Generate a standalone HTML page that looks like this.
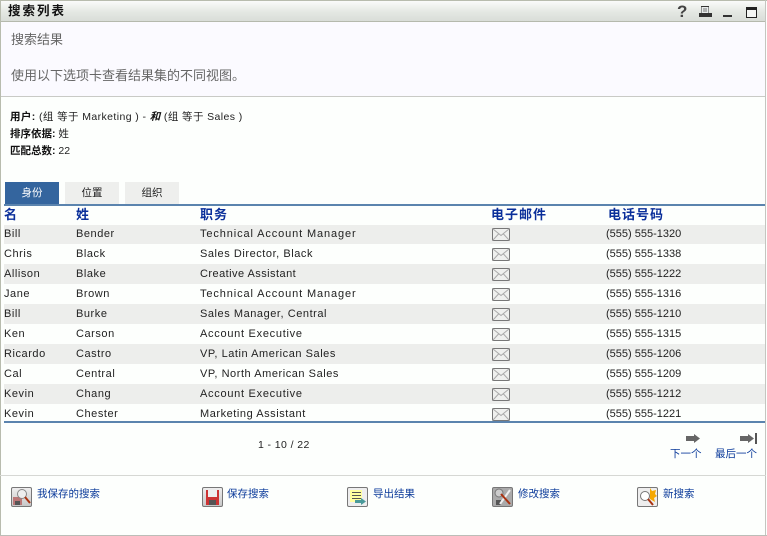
<!DOCTYPE html>
<html lang="zh"><head><meta charset="utf-8"><style>
html,body{margin:0;padding:0}
body{width:767px;height:536px;position:relative;overflow:hidden;background:#fff;font-family:"Liberation Sans","WenQuanYi Zen Hei","Noto Sans CJK SC",sans-serif;font-size:11px;color:#222}
div,a,svg{position:absolute}
.t{white-space:nowrap;line-height:14px}
.r{left:4px;width:761px;height:20px}
.g{background:#edeeec}
.c{white-space:nowrap;line-height:14px;letter-spacing:.55px;color:#222}
.p{letter-spacing:0;left:606px}
.h{white-space:nowrap;font-weight:bold;font-size:13px;letter-spacing:1px;line-height:16px;color:#0a2f9a;top:207px}
.l{white-space:nowrap;color:#0a3a9a;font-size:10.5px;line-height:14px}
.b{font-weight:bold;color:#111}
.tab{top:182px;width:54px;height:22px;background:#eeefed;text-align:center;line-height:22px;font-size:10.5px;color:#222}
.ic{width:21px;height:20px;top:487px;background:linear-gradient(#eee,#c8c8c8);border:1px solid #777;border-radius:2px;box-sizing:border-box;overflow:hidden}
</style></head><body>
<div style="left:0;top:0;width:767px;height:536px;background:#fdfffd"></div>
<div style="left:0;top:1px;width:766px;height:20px;background:linear-gradient(#fafbfa,#e4e8e3 55%,#d9ddd8)"></div>
<div style="left:0;top:21px;width:766px;height:1px;background:#b5b9ad"></div>
<div style="left:0;top:22px;width:766px;height:74px;background:#fbfaff"></div>
<div style="left:0;top:96px;width:766px;height:1px;background:#c9cac6"></div>
<div style="left:0;top:0;width:767px;height:1px;background:#b8bcae"></div>
<div style="left:0;top:0;width:1px;height:536px;background:#b8bcae"></div>
<div style="left:765px;top:0;width:1px;height:536px;background:#c4c6c0"></div>
<div style="left:0;top:535px;width:767px;height:1px;background:#bcbeb8"></div>

<div class="t" style="left:8px;top:4px;font-size:12.5px;font-weight:bold;color:#111;letter-spacing:2px">搜索列表</div>
<div class="t" style="left:677px;top:5px;font-size:17px;font-weight:bold;color:#444">?</div>
<svg style="left:699px;top:6px" width="14" height="12"><path d="M0 7h2v-7h8v7h3v4H0z" fill="#333"/><rect x="2.500" y="1" width="7" height="6" fill="#e8ecec"/><path d="M4 3h4M4 5h4" stroke="#777"/></svg>
<div style="left:723px;top:15px;width:9px;height:2px;background:#333"></div>
<div style="left:746px;top:7px;width:9px;height:7px;border:1px solid #222;border-top:3px solid #222;background:#f4f6f4"></div>

<div class="t" style="left:11px;top:33px;font-size:13px;color:#666">搜索结果</div>
<div class="t" style="left:11px;top:69px;font-size:13px;color:#666">使用以下选项卡查看结果集的不同视图。</div>

<div class="t" style="left:10px;top:110px;font-size:10.5px;letter-spacing:.4px"><span class="b">用户:</span> (组 等于 Marketing ) - <span class="b"><i>和</i></span> (组 等于 Sales )</div>
<div class="t" style="left:10px;top:127px;font-size:10.5px"><span class="b">排序依据:</span> 姓</div>
<div class="t" style="left:10px;top:144px;font-size:10.5px"><span class="b">匹配总数:</span> 22</div>

<div class="tab" style="left:5px;background:#34659e;color:#fff">身份</div>
<div class="tab" style="left:65px">位置</div>
<div class="tab" style="left:125px">组织</div>
<div style="left:4px;top:204px;width:761px;height:2px;background:#5b84ae"></div>
<div class="h" style="left:4px">名</div>
<div class="h" style="left:76px">姓</div>
<div class="h" style="left:200px">职务</div>
<div class="h" style="left:491px">电子邮件</div>
<div class="h" style="left:608px">电话号码</div>

<div class="r g" style="top:225px;height:19px"></div>
<div class="r g" style="top:264px"></div>
<div class="r g" style="top:304px"></div>
<div class="r g" style="top:344px"></div>
<div class="r g" style="top:384px"></div>

<div class="c" style="left:4px;top:227px">Bill</div><div class="c" style="left:76px;top:227px">Bender</div><div class="c" style="left:200px;top:227px;letter-spacing:.88px">Technical Account Manager</div><div class="c p" style="top:227px">(555) 555-1320</div>
<div class="c" style="left:4px;top:247px">Chris</div><div class="c" style="left:76px;top:247px">Black</div><div class="c" style="left:200px;top:247px">Sales Director, Black</div><div class="c p" style="top:247px">(555) 555-1338</div>
<div class="c" style="left:4px;top:267px">Allison</div><div class="c" style="left:76px;top:267px">Blake</div><div class="c" style="left:200px;top:267px;letter-spacing:.45px">Creative Assistant</div><div class="c p" style="top:267px">(555) 555-1222</div>
<div class="c" style="left:4px;top:287px">Jane</div><div class="c" style="left:76px;top:287px">Brown</div><div class="c" style="left:200px;top:287px;letter-spacing:.88px">Technical Account Manager</div><div class="c p" style="top:287px">(555) 555-1316</div>
<div class="c" style="left:4px;top:307px">Bill</div><div class="c" style="left:76px;top:307px">Burke</div><div class="c" style="left:200px;top:307px">Sales Manager, Central</div><div class="c p" style="top:307px">(555) 555-1210</div>
<div class="c" style="left:4px;top:327px">Ken</div><div class="c" style="left:76px;top:327px">Carson</div><div class="c" style="left:200px;top:327px;letter-spacing:.72px">Account Executive</div><div class="c p" style="top:327px">(555) 555-1315</div>
<div class="c" style="left:4px;top:347px">Ricardo</div><div class="c" style="left:76px;top:347px">Castro</div><div class="c" style="left:200px;top:347px">VP, Latin American Sales</div><div class="c p" style="top:347px">(555) 555-1206</div>
<div class="c" style="left:4px;top:367px">Cal</div><div class="c" style="left:76px;top:367px">Central</div><div class="c" style="left:200px;top:367px">VP, North American Sales</div><div class="c p" style="top:367px">(555) 555-1209</div>
<div class="c" style="left:4px;top:387px">Kevin</div><div class="c" style="left:76px;top:387px">Chang</div><div class="c" style="left:200px;top:387px;letter-spacing:.72px">Account Executive</div><div class="c p" style="top:387px">(555) 555-1212</div>
<div class="c" style="left:4px;top:407px">Kevin</div><div class="c" style="left:76px;top:407px">Chester</div><div class="c" style="left:200px;top:407px">Marketing Assistant</div><div class="c p" style="top:407px">(555) 555-1221</div>

<svg style="left:492px;top:228px" width="19" height="200" fill="#eff0ee" stroke="#777">
<defs><g id="e"><rect x=".5" y=".5" width="17" height="12" rx="1"/><path d="M1 1l8 6.500L17 1M1 12l5.500-6M17 12l-5.500-6" fill="none" stroke="#aaa"/></g></defs>
<use href="#e"/>
<use href="#e" y="20"/>
<use href="#e" y="40"/>
<use href="#e" y="60"/>
<use href="#e" y="80"/>
<use href="#e" y="100"/>
<use href="#e" y="120"/>
<use href="#e" y="140"/>
<use href="#e" y="160"/>
<use href="#e" y="180"/>
</svg>

<div style="left:4px;top:421px;width:761px;height:2px;background:#5b84ae"></div>
<div class="t" style="left:258px;top:438px;font-size:10.5px;letter-spacing:.4px">1 - 10 / 22</div>

<svg style="left:686px;top:433px" width="72" height="12"><path d="M0 3h8V1l6 4.500-6 4.500V8H0z" fill="#666"/><path d="M54 3h8V1l6 4.500-6 4.500V8h-8z" fill="#666"/><rect x="69" y="0" width="2" height="11" fill="#555"/></svg>
<div class="l" style="left:670px;top:447px">下一个</div>
<div class="l" style="left:715px;top:447px">最后一个</div>

<div style="left:0;top:475px;width:766px;height:1px;background:#d6d8d4"></div>

<div class="ic" style="left:11px"><svg style="left:0;top:0" width="19" height="18"><rect x="1" y="9" width="9" height="8" fill="#b77"/><rect x="3" y="13" width="5" height="4" fill="#555"/><circle cx="10" cy="6" r="4.500" fill="#eee" stroke="#888"/><path d="M13 9l5 6" stroke="#a31" stroke-width="2"/></svg></div>
<div class="l" style="left:37px;top:487px">我保存的搜索</div>
<div class="ic" style="left:202px"><svg style="left:0;top:0" width="19" height="18"><rect x="3" y="2" width="13" height="15" fill="#c33"/><rect x="5" y="2" width="9" height="7" fill="#eee"/><rect x="6" y="12" width="7" height="5" fill="#555"/></svg></div>
<div class="l" style="left:227px;top:487px">保存搜索</div>
<div class="ic" style="left:347px;background:#eee"><svg style="left:0;top:0" width="19" height="18"><rect x="2" y="2" width="12" height="12" fill="#ffffa0"/><path d="M4 4.500h9M4 7.500h9M4 10.500h9" stroke="#555"/><path d="M7 12h6v-2l5 3.500-5 3.500v-2H7z" fill="#4a9a9a"/></svg></div>
<div class="l" style="left:373px;top:487px">导出结果</div>
<div class="ic" style="left:492px;background:#aaa"><svg style="left:0;top:0" width="19" height="18"><circle cx="6" cy="5" r="4" fill="#ccc" stroke="#777"/><rect x="3" y="12" width="5" height="5" fill="#555"/><path d="M17 2L7 16" stroke="#eee" stroke-width="2"/><path d="M8 6l9 10" stroke="#a31" stroke-width="2"/></svg></div>
<div class="l" style="left:518px;top:487px">修改搜索</div>
<div class="ic" style="left:637px;background:#eee"><svg style="left:0;top:0" width="19" height="18"><path d="M12 0l2 3 4-1-1 4 2 2-3 2 1 4-5-3z" fill="#f5a800"/><circle cx="7" cy="8" r="4.500" fill="#fff" stroke="#777"/><path d="M10 11l5 6" stroke="#a31" stroke-width="2"/></svg></div>
<div class="l" style="left:663px;top:487px">新搜索</div>
</body></html>
